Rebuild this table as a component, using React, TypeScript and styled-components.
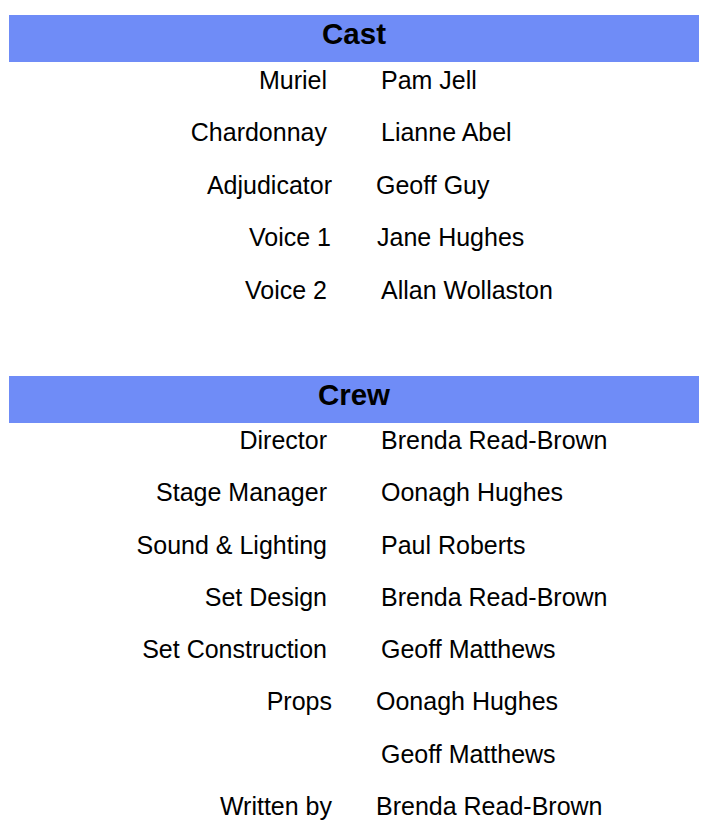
import styled, { createGlobalStyle } from 'styled-components';

const GlobalStyle = createGlobalStyle`
  body {
    margin: 0;
    background: #ffffff;
    font-family: 'Liberation Sans', Arial, sans-serif;
    color: #000000;
  }
`;

const Page = styled.div`
  padding: 15px 12px 0 9px;
  display: flex;
  flex-direction: column;
  gap: 47.5px;
`;

const Section = styled.section`
  display: flex;
  flex-direction: column;
`;

const Heading = styled.h2`
  margin: 0;
  height: 47px;
  box-sizing: border-box;
  padding-top: 2px;
  background: #6f8cf7;
  text-align: center;
  font-size: 29.5px;
  font-weight: 700;
  line-height: normal;
`;

const Rows = styled.div<{ $rowHeight: number }>`
  padding-top: 3.5px;
  display: grid;
  grid-template-columns: 1fr 1fr;
  grid-auto-rows: ${({ $rowHeight }) => $rowHeight}px;
  font-size: 25px;
  line-height: normal;
`;

const Role = styled.div<{ $shift: number }>`
  text-align: right;
  padding-right: ${({ $shift }) => 27 - $shift}px;
  white-space: nowrap;
`;

const Name = styled.div<{ $shift: number }>`
  text-align: left;
  padding-left: ${({ $shift }) => 27 - $shift}px;
  white-space: nowrap;
`;

type Credit = { role: string; name: string; shift?: number };

const cast: Credit[] = [
  { role: 'Muriel', name: 'Pam Jell' },
  { role: 'Chardonnay', name: 'Lianne Abel' },
  { role: 'Adjudicator', name: 'Geoff Guy', shift: 5 },
  { role: 'Voice 1', name: 'Jane Hughes', shift: 4 },
  { role: 'Voice 2', name: 'Allan Wollaston' }
];

const crew: Credit[] = [
  { role: 'Director', name: 'Brenda Read-Brown' },
  { role: 'Stage Manager', name: 'Oonagh Hughes' },
  { role: 'Sound & Lighting', name: 'Paul Roberts' },
  { role: 'Set Design', name: 'Brenda Read-Brown' },
  { role: 'Set Construction', name: 'Geoff Matthews' },
  { role: 'Props', name: 'Oonagh Hughes', shift: 5 },
  { role: '', name: 'Geoff Matthews' },
  { role: 'Written by', name: 'Brenda Read-Brown', shift: 5 }
];

function CreditTable({
  title,
  credits,
  rowHeight
}: {
  title: string;
  credits: Credit[];
  rowHeight: number;
}) {
  return (
    <Section>
      <Heading>{title}</Heading>
      <Rows $rowHeight={rowHeight}>
        {credits.map((c, i) => [
          <Role key={`r${i}`} $shift={c.shift ?? 0}>
            {c.role}
          </Role>,
          <Name key={`n${i}`} $shift={c.shift ?? 0}>
            {c.name}
          </Name>
        ])}
      </Rows>
    </Section>
  );
}

export default function App() {
  return (
    <>
      <GlobalStyle />
      <Page>
        <CreditTable title="Cast" credits={cast} rowHeight={52.5} />
        <CreditTable title="Crew" credits={crew} rowHeight={52.3} />
      </Page>
    </>
  );
}
